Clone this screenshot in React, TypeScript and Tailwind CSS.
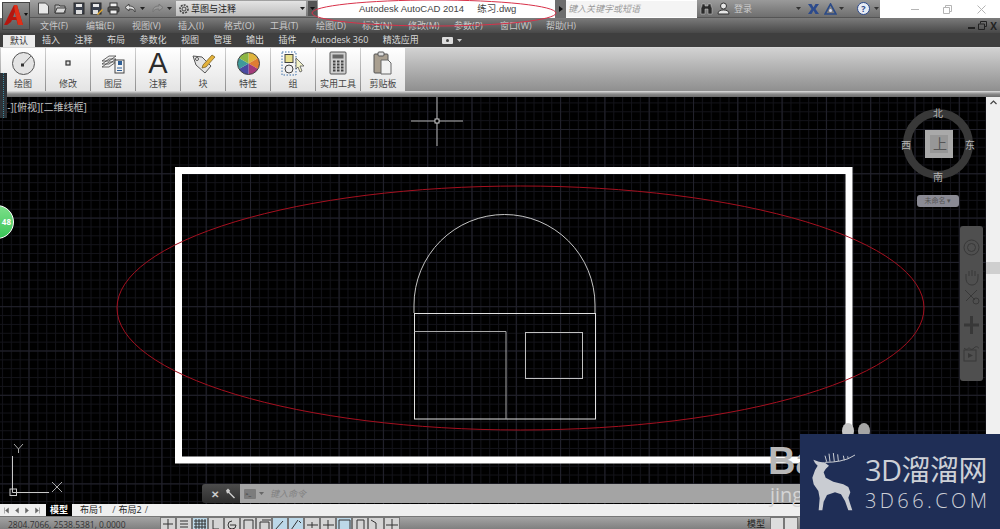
import React from 'react';

const cjk = { fontFamily: '"Open Sans", "Noto Sans CJK SC", sans-serif' };

const menus = ['文件(F)', '编辑(E)', '视图(V)', '插入(I)', '格式(O)', '工具(T)', '绘图(D)', '标注(N)', '修改(M)', '参数(P)', '窗口(W)', '帮助(H)'];
const tabs = ['插入', '注释', '布局', '参数化', '视图', '管理', '输出', '插件', 'Autodesk 360', '精选应用'];

const Doc = () => (
  <svg width="13" height="13" viewBox="0 0 13 13"><path d="M1.500 1h7l3 3v8h-10z" fill="#e8e8e8" stroke="#4a4a4a" /></svg>
);
const Open = () => (
  <svg width="13" height="13" viewBox="0 0 13 13"><path d="M1 3h4l1 1h5v7H1z" fill="#bbb" stroke="#3d3d3d" /><path d="M1 11l2-5h9l-2 5z" fill="#d8d8d8" stroke="#3d3d3d" /></svg>
);
const Save = () => (
  <svg width="12" height="13" viewBox="0 0 12 13"><rect x="1" y="1" width="10" height="11" fill="#3c424e" stroke="#2a2a2a" /><rect x="3" y="2" width="6" height="3" fill="#e8e8e8" /><rect x="3" y="8" width="6" height="4" fill="#ddd" /></svg>
);
const SaveAs = () => (
  <svg width="13" height="13" viewBox="0 0 13 13"><rect x="1" y="1" width="10" height="11" fill="#3c424e" stroke="#2a2a2a" /><rect x="3" y="2" width="6" height="3" fill="#e8e8e8" /><rect x="3" y="8" width="5" height="4" fill="#ddd" /><path d="M7 12l5-5 1 1-5 5z" fill="#e2a72e" /></svg>
);
const Print = () => (
  <svg width="13" height="13" viewBox="0 0 13 13"><rect x="3" y="1" width="7" height="4" fill="#eee" stroke="#333" /><rect x="1" y="5" width="11" height="5" rx="1" fill="#555" stroke="#333" /><rect x="3" y="8" width="7" height="4" fill="#eee" stroke="#333" /></svg>
);
const Undo = ({ flip, dim }: { flip?: boolean; dim?: boolean }) => (
  <svg width="13" height="11" viewBox="0 0 13 11" style={{ transform: flip ? 'scaleX(-1)' : undefined }}>
    <path d="M5 1L1 4.500 5 8V6c3 0 5 .5 6 3 .5-4-2-6-6-6z" fill={dim ? '#999' : '#ddd'} stroke={dim ? '#777' : '#444'} />
  </svg>
);
const Caret = ({ color = '#222' }: { color?: string }) => (
  <svg width="5" height="3" viewBox="0 0 5 3"><path d="M0 0h5L2.500 3z" fill={color} /></svg>
);

const TitleBar = () => (
  <div className="flex h-[18px] bg-white" style={cjk}>
    <div className="w-[30px] shrink-0" />
    <div className="w-[288px] h-[18px] flex items-center bg-gradient-to-b from-[#a2a2a2] to-[#777] border-b border-[#555] pl-[7px]">
      <div className="w-[13px]"><Doc /></div>
      <div className="ml-[4px] w-[13px]"><Open /></div>
      <div className="ml-[6px] w-[12px]"><Save /></div>
      <div className="ml-[5px] w-[13px]"><SaveAs /></div>
      <div className="ml-[4px] w-[13px]"><Print /></div>
      <div className="ml-[4px] w-[13px]"><Undo /></div>
      <div className="ml-[3px] w-[6px]"><Caret /></div>
      <div className="ml-[5px] w-[13px]"><Undo flip dim /></div>
      <div className="ml-[3px] w-[6px]"><Caret /></div>
      <div className="ml-[3px] w-[130px] h-[15px] bg-gradient-to-b from-[#e4e4e4] to-[#bdbdbd] flex items-center pl-[2px] pr-[1px]">
        <svg width="12" height="12" viewBox="0 0 12 12"><circle cx="6" cy="6" r="4" fill="none" stroke="#444" strokeWidth="1.600" strokeDasharray="2 1" /><circle cx="6" cy="6" r="2" fill="none" stroke="#444" /></svg>
        <span className="ml-[1px] text-[9px] text-[#222] whitespace-nowrap">草图与注释</span>
        <span className="ml-auto"><Caret /></span>
      </div>
      <div className="ml-[2px] w-[9px] h-[15px] bg-[#555] flex items-center justify-center"><Caret color="#111" /></div>
    </div>
    <div
      className="w-[237px] pl-[41px] flex items-center text-[9.500px] text-[#444] whitespace-pre pt-[1px]"
      style={{ fontFamily: '"Liberation Sans", "Noto Sans CJK SC", sans-serif' }}
    >
      Autodesk AutoCAD 2014     练习.dwg
    </div>
    <div className="w-[11px] flex items-center justify-center bg-[#6d6d6d]">
      <svg width="4" height="6" viewBox="0 0 4 6"><path d="M0 0l4 3-4 3z" fill="#111" /></svg>
    </div>
    <div className="w-[131px] h-[16px] mt-[1px] bg-[#f4f4f4] text-[9px] italic text-[#999] pl-[2px] flex items-center whitespace-nowrap">键入关键字或短语</div>
    <div className="w-[183px] bg-gradient-to-b from-[#9a9a9a] to-[#6e6e6e] border-b border-[#555] flex items-center text-[9px] text-[#ccc]">
      <svg className="ml-[3px]" width="13" height="12" viewBox="0 0 13 12"><path d="M1 11V5l1-2V1h3v2h3V1h3v2l1 2v6H8V6H5v5z" fill="#2b2b2b" stroke="#ccc" strokeWidth=".5" /></svg>
      <svg className="ml-[4px]" width="13" height="13" viewBox="0 0 13 13"><circle cx="6.500" cy="4" r="3" fill="#e6e6e6" stroke="#333" /><path d="M1 12c0-3 2-4 5.500-4S12 9 12 12z" fill="#e6e6e6" stroke="#333" /></svg>
      <span className="ml-[4px] w-[62px]">登录</span>
      <Caret color="#333" />
      <svg className="ml-[6px]" width="13" height="12" viewBox="0 0 13 12"><path d="M1 1h3.500l2 3.500L8.500 1H12L8.500 6 12 11H8.500l-2-3.500L4.500 11H1l3.500-5z" fill="#2c4a8c" /></svg>
      <svg className="ml-[4px]" width="13" height="12" viewBox="0 0 13 12"><path d="M6.500 1l5.500 10H1z" fill="none" stroke="#2b4a86" strokeWidth="1.600" /><circle cx="6.500" cy="7.500" r="1.500" fill="#dde" /></svg>
      <span className="ml-[2px]"><Caret color="#333" /></span>
      <div className="ml-[13px] w-[13px] h-[13px] rounded-full bg-[#e8ecf4] border border-[#2c4a8c] text-[9px] leading-[11px] text-center font-bold text-[#2c4a8c]">?</div>
      <span className="ml-[4px]"><Caret color="#333" /></span>
    </div>
    <div className="w-[120px] flex items-center text-[#aaa]">
      <div className="ml-[31px] w-[8px] h-px bg-[#b5b5b5]" />
      <svg className="ml-[24px]" width="9" height="9" viewBox="0 0 9 9"><path d="M2.500 2.500V.5h6v6h-2M.5 2.500h6v6h-6z" fill="none" stroke="#b5b5b5" /></svg>
      <svg className="ml-[25px]" width="9" height="9" viewBox="0 0 9 9"><path d="M.5.5l8 8M8.500.5l-8 8" stroke="#b5b5b5" /></svg>
    </div>
  </div>
);

const MenuBar = () => (
  <div className="flex items-center h-[15px] bg-gradient-to-b from-[#7b7b7b] to-[#484848] pl-[40px] text-[9px] text-[#c9c9c9]" style={cjk}>
    <div className="flex gap-[18px] whitespace-nowrap">
      {menus.map(m => <span key={m} className="w-[28px]">{m}</span>)}
    </div>
    <div className="ml-auto flex items-center gap-[3px] pr-[3px]">
      <div className="w-[7px] h-[2px] mt-[5px] bg-[#222]" />
      <svg width="9" height="9" viewBox="0 0 9 9"><path d="M2.500 2.500V.5h6v5h-2M.5 3h6v5.500h-6z" fill="none" stroke="#222" /></svg>
      <span className="font-bold text-[#222] text-[10px] leading-none">X</span>
    </div>
  </div>
);

const RibbonTabs = () => (
  <div className="flex items-end h-[14px] bg-[#3f3f3f] pl-[3px] text-[9px] text-[#d9d9d9] whitespace-nowrap" style={cjk}>
    <div className="w-[32px] h-[12px] bg-[#ececec] text-[#333] text-center leading-[12px]">默认</div>
    <div className="flex h-[14px] items-center ml-[7px] gap-[14.500px]">
      {tabs.map(t => <span key={t}>{t}</span>)}
    </div>
    <div className="flex items-center h-[14px] ml-[23px] gap-[4px]">
      <svg width="11" height="7" viewBox="0 0 11 7"><rect width="11" height="7" rx="1" fill="#ddd" /><circle cx="5.500" cy="3.500" r="1.500" fill="#444" /></svg>
      <Caret color="#ccc" />
    </div>
  </div>
);

const WheelIcon = () => (
  <svg width="25" height="25" viewBox="0 0 25 25"><circle cx="12.500" cy="12.500" r="11" fill="#e4e4e4" stroke="#555" /><rect x="10.500" y="13" width="2" height="2" fill="none" stroke="#333" /><path d="M12.500 13L20 5" stroke="#666" /></svg>
);
const ModifyIcon = () => (
  <svg width="25" height="25" viewBox="0 0 25 25"><rect x="10" y="10" width="4" height="4" fill="#ddd" stroke="#333" strokeWidth="1.200" /></svg>
);
const LayerIcon = () => (
  <svg width="25" height="25" viewBox="0 0 25 25">
    <path d="M1 10l7-5h7l-7 5zM1 13l7-5h7l-7 5zM1 16l7-5h7l-7 5z" fill="#eee" stroke="#444" strokeWidth=".8" />
    <rect x="14" y="9" width="9" height="13" fill="#f4f4f4" stroke="#444" />
    <rect x="17" y="10" width="4" height="4" fill="#2f5f96" />
    <path d="M16 17h5M16 19.500h5" stroke="#2f5f96" />
  </svg>
);
const TextIcon = () => <span className="text-[29px] leading-[25px] text-[#2c2c2c]" style={{ fontFamily: '"Liberation Sans", sans-serif' }}>A</span>;
const BlockIcon = () => (
  <svg width="25" height="25" viewBox="0 0 25 25">
    <path d="M2 5l9 1 9 9-6 7-9-8z" fill="#e4e4e4" stroke="#555" />
    <circle cx="6" cy="8" r="1.500" fill="#fff" stroke="#555" />
    <path d="M12 14l9-10 3 2-9 10-4 1z" fill="#e4b23a" stroke="#70561a" strokeWidth=".7" />
  </svg>
);
const ColorIcon = () => (
  <svg width="25" height="25" viewBox="0 0 25 25">
    <path d="M12.500 12.500L12.500 1.500A11 11 0 0 1 22 7z" fill="#e0b43c" />
    <path d="M12.500 12.500L22 7A11 11 0 0 1 22 18z" fill="#df7d33" />
    <path d="M12.500 12.500L22 18A11 11 0 0 1 12.500 23.500z" fill="#a33a7a" />
    <path d="M12.500 12.500L12.500 23.500A11 11 0 0 1 3 18z" fill="#4a4aa0" />
    <path d="M12.500 12.500L3 18A11 11 0 0 1 3 7z" fill="#3f9a9a" />
    <path d="M12.500 12.500L3 7A11 11 0 0 1 12.500 1.500z" fill="#8cb644" />
    <circle cx="12.500" cy="12.500" r="11" fill="none" stroke="#444" />
  </svg>
);
const GroupIcon = () => (
  <svg width="25" height="25" viewBox="0 0 25 25">
    <rect x="1" y="1" width="14" height="23" fill="none" stroke="#3d6fa8" strokeDasharray="1.500 1.500" />
    <rect x="4" y="3.500" width="8" height="8" fill="#e8e08e" stroke="#444" />
    <circle cx="8" cy="18" r="4" fill="#eee" stroke="#444" />
    <path d="M15 7l8 8-4 0 2 5-2 1-2-5-2 2z" fill="#f2f2c8" stroke="#555" strokeWidth=".8" />
  </svg>
);
const CalcIcon = () => (
  <svg width="25" height="25" viewBox="0 0 25 25">
    <rect x="4" y="1" width="16" height="22" rx="1" fill="#cfcfcf" stroke="#555" />
    <rect x="6.500" y="3.500" width="11" height="4" fill="#666" />
    <path d="M7 10.500h2.500M11 10.500h2.500M15 10.500h2.500M7 13.500h2.500M11 13.500h2.500M15 13.500h2.500M7 16.500h2.500M11 16.500h2.500M15 16.500h2.500M7 19.500h2.500M11 19.500h2.500M15 19.500h2.500" stroke="#444" strokeWidth="1.800" />
  </svg>
);
const ClipIcon = () => (
  <svg width="25" height="25" viewBox="0 0 25 25">
    <rect x="3" y="3" width="14" height="19" rx="1" fill="#a99f90" stroke="#555" />
    <rect x="7" y="1" width="6" height="4" rx="1" fill="#ddd" stroke="#555" />
    <path d="M10 9h7l3 3v11H10z" fill="#f2f2f2" stroke="#666" />
  </svg>
);

const panels = [
  { label: '绘图', icon: <WheelIcon /> },
  { label: '修改', icon: <ModifyIcon /> },
  { label: '图层', icon: <LayerIcon /> },
  { label: '注释', icon: <TextIcon /> },
  { label: '块', icon: <BlockIcon /> },
  { label: '特性', icon: <ColorIcon /> },
  { label: '组', icon: <GroupIcon /> },
  { label: '实用工具', icon: <CalcIcon /> },
  { label: '剪贴板', icon: <ClipIcon /> },
];

const Ribbon = () => (
  <div className="h-[44px] border-t border-[#d8d8d8] bg-gradient-to-b from-[#d2d2d2] to-[#8f8f8f] flex pl-px gap-px" style={cjk}>
    {panels.map(p => (
      <div key={p.label} className="w-[44px] h-[43px] bg-gradient-to-b from-[#ffffff] to-[#e4e4e4] flex flex-col items-center pt-[2px]">
        <div className="h-[26px] flex items-center justify-center">{p.icon}</div>
        <span className="mt-[2px] text-[9px] leading-[11px] text-[#444] whitespace-nowrap">{p.label}</span>
      </div>
    ))}
  </div>
);

const Drawing = () => (
  <svg className="absolute inset-0" width="986" height="407" viewBox="0 97 986 407">
    <defs>
      <pattern id="minor" x="28.500" y="84.700" width="8.860" height="8.860" patternUnits="userSpaceOnUse">
        <path d="M.5 0V8.860M0 .5H8.860" fill="none" stroke="#131319" />
      </pattern>
      <pattern id="major" x="28.500" y="84.700" width="44.300" height="44.300" patternUnits="userSpaceOnUse">
        <path d="M.5 0V44.300M0 .5H44.300" fill="none" stroke="#22222c" />
      </pattern>
    </defs>
    <rect x="0" y="97" width="986" height="407" fill="url(#minor)" />
    <rect x="0" y="97" width="986" height="407" fill="url(#major)" />

    <rect x="178.500" y="170.500" width="670.500" height="289.500" fill="none" stroke="#fff" strokeWidth="7" />
    <ellipse cx="520.500" cy="308" rx="403.500" ry="122" fill="none" stroke="#a5101f" />
    <path d="M414 313V305a90.500 90.500 0 0 1 181 0V313" fill="none" stroke="#c4c4c4" />
    <rect x="414.500" y="313.500" width="181" height="105.500" fill="none" stroke="#e2e2e2" />
    <path d="M414.500 331.500H506V419" fill="none" stroke="#a8a8a8" />
    <rect x="525.500" y="332.500" width="57" height="46" fill="none" stroke="#c0c0c0" />

    <path d="M437 96V146M411 121H463" stroke="#b5b5b5" />
    <rect x="435" y="119" width="4" height="4" fill="#000" stroke="#d0d0d0" />

    <circle cx="938" cy="144" r="31" fill="none" stroke="#383838" strokeWidth="8" />
    <rect x="925" y="130" width="28" height="28" fill="#a9a9a9" />
    <rect x="930" y="135" width="18" height="18" fill="#979797" />

    <path d="M12.500 456V492.500H49" fill="none" stroke="#c8c8c8" />
    <rect x="10" y="489" width="6.500" height="6.500" fill="none" stroke="#c8c8c8" />
    <path d="M14 444l4.500 5 4.500-5M18.500 449v4M52 482l10 10M62 482l-10 10" fill="none" stroke="#a8a8a8" />

    <ellipse cx="848" cy="431" rx="6" ry="8" fill="#c5c5c5" />
    <ellipse cx="864" cy="431" rx="6" ry="8" fill="#a5a5a5" />
  </svg>
);

const NavBar = () => (
  <div className="absolute left-[960px] top-[129px] w-[23px] h-[155px] bg-[#4f4f4f] rounded-[3px] flex flex-col items-center pt-[13px]">
    <svg width="17" height="17" viewBox="0 0 17 17"><circle cx="8.500" cy="8.500" r="7.500" fill="none" stroke="#383838" /><circle cx="8.500" cy="8.500" r="4" fill="none" stroke="#383838" /></svg>
    <svg className="mt-[12px]" width="17" height="18" viewBox="0 0 17 18"><path d="M3 10V6M6 8V3M9 8V2M12 8V3M15 9V6M3 10c0 5 3 7 6 7s6-2 6-8" fill="none" stroke="#383838" /></svg>
    <svg className="mt-[2px]" width="17" height="17" viewBox="0 0 17 17"><path d="M2 2l10 10M14 2L3 13" stroke="#383838" /><circle cx="13" cy="13" r="3" fill="none" stroke="#383838" /></svg>
    <svg className="mt-[10px]" width="17" height="20" viewBox="0 0 17 20"><path d="M8.500 1v18M1 10h15" stroke="#383838" strokeWidth="3" /></svg>
    <svg className="mt-[9px]" width="17" height="18" viewBox="0 0 17 18"><path d="M1 4c3 3 4 0 5 0s2 3 5 0 4 0 5 0" fill="none" stroke="#383838" /><rect x="1" y="6" width="12" height="11" fill="none" stroke="#383838" /><path d="M5 9l5 2.500-5 2.500z" fill="#383838" /></svg>
  </div>
);

const CommandLine = () => (
  <div className="absolute left-[202px] top-[387px] w-[640px] h-[19px] flex rounded-l-[3px] overflow-hidden" style={cjk}>
    <div className="w-[38px] bg-gradient-to-b from-[#4c4c4c] to-[#2e2e2e] flex items-center pl-[9px] gap-[6px]">
      <span className="text-[10px] font-bold text-[#ccc] leading-none">✕</span>
      <svg width="11" height="11" viewBox="0 0 11 11"><path d="M1 2.500l2-2 2 2-.5 1.500L10 9.500 9 10.500 3.500 5 2 5.500z" fill="#ccc" /></svg>
    </div>
    <div className="flex-1 bg-[#a4a4a4] flex items-center pl-[4px]">
      <div className="w-[12px] h-[10px] bg-[#7c7c7c] rounded-[1px] text-[6px] leading-[10px] text-[#222] pl-px">&gt;_</div>
      <span className="ml-[3px]"><Caret color="#666" /></span>
      <span className="ml-[6px] text-[9px] italic text-[#818181]">键入命令</span>
    </div>
  </div>
);

const Compass = () => (
  <>
    {[
      { t: '北', c: 'left-[933px] top-[10px]' },
      { t: '南', c: 'left-[933px] top-[74px]' },
      { t: '西', c: 'left-[901px] top-[42px]' },
      { t: '东', c: 'left-[965px] top-[42px]' },
    ].map(d => (
      <span key={d.t} className={`absolute ${d.c} text-[10px] leading-[12px] text-[#b4b4b4]`}>{d.t}</span>
    ))}
    <span className="absolute left-[933px] top-[38px] text-[14px] leading-[18px] text-[#555]">上</span>
    <div className="absolute left-[917px] top-[98px] w-[42px] h-[12px] rounded-[3px] bg-[#8a8a94] text-[7px] leading-[12px] text-center text-[#555]">未命名 ▾</div>
  </>
);

const statusIcons = [
  { on: false, d: 'M7 1v11M2 6h10' },
  { on: false, d: 'M3 3h8M3 6h8M3 9h8' },
  { on: true, d: 'M1 3h12M1 6h12M1 9h12M1 12h12M3 1v12M6 1v12M9 1v12M12 1v12' },
  { on: false, d: 'M4 2v9h6' },
  { on: false, d: 'M7 3a4 4 0 1 0 4 4M5 7h6' },
  { on: false, d: 'M3 2h9v11H3z' },
  { on: false, d: 'M3 4h9v9H3zM5 2h9' },
  { on: true, d: 'M2 12L10 3M2 12h10' },
  { on: true, d: 'M2 12L9 2M10 3l2 2' },
  { on: false, d: 'M2 7h11M7 4v6' },
  { on: false, d: 'M2 7h11M7 2v10' },
  { on: true, d: 'M2 2h11v11H2z' },
  { on: false, d: 'M4 2h7v10H4z' },
  { on: false, d: 'M2 2l5 3v7h5' },
  { on: false, d: 'M7 1v12M1 7h12' },
];

const SheetTabs = () => (
  <div className="flex items-center h-[12px] bg-[#efefef] text-[9px] text-[#222] whitespace-nowrap" style={cjk}>
    <div className="flex items-center gap-[2px] pl-[3px] w-[46px]">
      {['M5 2L2 4.500 5 7zM1 1.500v6', 'M5 2L2 4.500 5 7z', 'M2 2l3 2.500L2 7z', 'M2 2l3 2.500L2 7zM6 1.500v6'].map(d => (
        <svg key={d} width="8" height="9" viewBox="0 0 7 9"><path d={d} fill="#666" stroke="#666" strokeWidth=".5" /></svg>
      ))}
    </div>
    <div className="w-[26px] h-[12px] bg-black text-white text-center leading-[12px] font-bold">模型</div>
    <span className="ml-[8px]">布局1</span>
    <span className="ml-[9px] text-[#555]">/</span>
    <span className="ml-[3px]">布局2</span>
    <span className="ml-[3px] text-[#555]">/</span>
  </div>
);

const StatusBar = () => (
  <div className="relative h-[13px] overflow-hidden flex items-start bg-gradient-to-b from-[#a4a4a4] to-[#808080] border-t border-[#777]" style={cjk}>
    <span className="w-[160px] shrink-0 pl-[8px] pt-[3px] text-[8.500px] leading-[9px] text-[#333] whitespace-nowrap">2804.7066, 2538.5381, 0.0000</span>
    <div className="flex">
      {statusIcons.map(i => (
        <div key={i.d} className={`w-[16px] h-[16px] flex justify-center border border-[#777] ${i.on ? 'bg-[#bcd8e8]' : 'bg-[#d4d4d4]'}`}>
          <svg width="14" height="14" viewBox="0 0 14 14"><path d={i.d} fill="none" stroke="#333" /></svg>
        </div>
      ))}
    </div>
    <span className="absolute left-[747px] top-0 text-[9px] text-[#222]">模型</span>
    <div className="absolute left-[770px] top-0 flex">
      <div className="w-[14px] h-[14px] bg-[#ddd] border border-[#777]" />
      <div className="w-[14px] h-[14px] bg-[#ddd] border border-[#777]" />
    </div>
  </div>
);

const Deer = () => (
  <svg className="shrink-0 mt-[11px] ml-[5px]" width="60" height="70" viewBox="0 0 180 210">
    <path
      d="M25 44L42 50 52 52 58 52 72 62 62 72 56 82 62 98 85 110 115 118 130 126 136 142 130 158 134 172 142 196 130 196 120 168 108 148 90 142 66 150 56 170 52 196 41 196 44 160 40 138 26 118 22 98 30 76 38 62 30 54Z"
      fill="#c9ccd2"
    />
    <path
      d="M60 52Q85 52 105 48 130 44 150 30M65 50L60 32M75 50L72 26M88 50L85 24M100 48L98 28M118 46L115 32M130 42L128 34"
      fill="none"
      stroke="#c9ccd2"
      strokeWidth="3"
    />
  </svg>
);

const Watermark = () => (
  <div className="absolute left-[800px] top-[434px] w-[200px] h-[95px] bg-[#1f2e56] flex" style={cjk}>
    <Deer />
    <div className="mt-[21px] flex flex-col text-[#cdd0d6]">
      <span className="text-[29px] leading-[30px] whitespace-nowrap tracking-[-.5px]">3D溜溜网</span>
      <span className="mt-[6px] text-[20px] leading-[20px] font-light whitespace-nowrap tracking-[3.400px]">3D66.COM</span>
    </div>
  </div>
);

const AppButton = () => (
  <div className="absolute left-[2px] top-[2px] w-[28px] h-[28px] bg-gradient-to-b from-[#909090] to-[#5c5c5c] border border-[#444]">
    <svg width="26" height="26" viewBox="0 0 26 26">
      <path d="M1 22L11 2h3L20 22h-5l-1.500-5H9l-1 2-4 3zM10 14h3l-1-5z" fill="#b5160f" fillRule="evenodd" />
      <path d="M11 2h3L20 22h-5l-3-13z" fill="#e03018" />
      <path d="M21 10h4l-2 3z" fill="#111" />
    </svg>
  </div>
);

export default function App() {
  return (
    <div className="relative w-[1000px] h-[529px] overflow-hidden flex flex-col bg-black" style={cjk}>
      <TitleBar />
      <MenuBar />
      <RibbonTabs />
      <Ribbon />
      <div className="h-[6px] bg-gradient-to-b from-[#e0e0e0] via-[#8a8a8a] to-[#6c6c6c]" />

      {/* canvas */}
      <div className="relative flex h-[407px]">
        <div className="relative w-[986px] bg-[#000]">
          <Drawing />
          <span className="absolute left-[4px] top-[4px] text-[10px] leading-[12px] text-[#c4c4c4] whitespace-nowrap">[-][俯视][二维线框]</span>
          <Compass />
          <NavBar />
          <CommandLine />
          <div className="absolute left-[-20px] top-[108px] w-[34px] h-[34px] rounded-full bg-gradient-to-b from-[#7be08a] to-[#36c456] border border-white text-white text-[8px] font-bold leading-[32px] text-right pr-[2px]">48</div>
          <div className="absolute left-0 top-[-24px] w-[7px] h-[45px] bg-[#2e3338]">
            <div className="ml-[3px] h-full w-px border-l border-dotted border-[#3b8aa0]" />
          </div>
          <div className="absolute left-[768px] top-[346px] text-[38px] leading-[36px] font-bold text-[#b8b8b8]" style={{ fontFamily: '"Liberation Sans", sans-serif' }}>Ba</div>
          <div className="absolute left-[770px] top-[388px] text-[20px] leading-[20px] text-[#d5d5d5]">jing</div>
        </div>
        <div className="w-[14px] bg-[#f0f0f0] flex flex-col items-center relative">
          <svg className="mt-[3px]" width="7" height="5" viewBox="0 0 7 5"><path d="M.5 4l3-3 3 3" fill="none" stroke="#444" strokeWidth="1.200" /></svg>
          <div className="absolute left-0 top-[165px] w-[14px] h-[12px] bg-[#cfcfcf]" />
        </div>
      </div>

      <SheetTabs />
      <StatusBar />

      <AppButton />
      <svg className="absolute left-[300px] top-0 pointer-events-none" width="270" height="30" viewBox="300 0 270 30">
        <ellipse cx="434" cy="13" rx="122" ry="13" fill="none" stroke="#d8324a" />
      </svg>
      <Watermark />
    </div>
  );
}
